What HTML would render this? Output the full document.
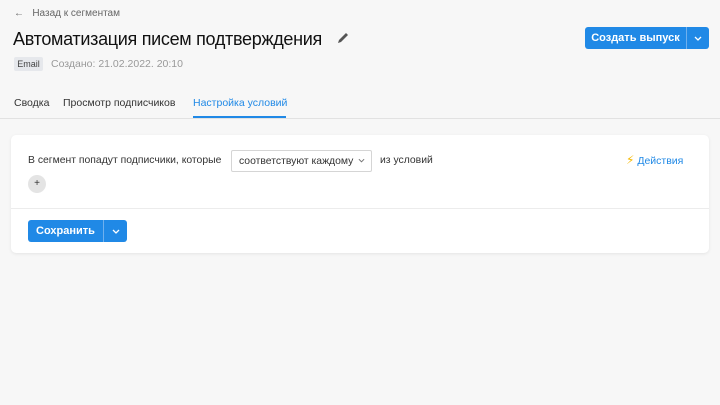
<!DOCTYPE html>
<html><head><meta charset="utf-8"><style>
*{box-sizing:border-box;margin:0;padding:0}
body{width:720px;height:405px;background:#f7f7f7;font-family:"Liberation Sans","DejaVu Sans",sans-serif;position:relative;overflow:hidden;color:#222}
.a{position:absolute;white-space:nowrap}
.btn{background:#2089e6;color:#fff;font-weight:bold;font-size:11px;border-radius:3px;display:flex;align-items:center}
</style></head><body>
<div class="a" style="left:14px;top:8px;font-size:10px;color:#666">&#8592;&nbsp;&nbsp; Назад к сегментам</div>
<div class="a" style="left:13px;top:29px;font-size:18px;color:#111;letter-spacing:-0.3px">Автоматизация писем подтверждения</div>
<svg class="a" style="left:336px;top:31px" width="14" height="14" viewBox="0 0 14 14"><path d="M2 12 L3 9 L10 2 L12 4 L5 11 Z" fill="#555"/></svg>
<div class="a" style="left:14px;top:57px;width:29px;height:14px;background:#e6e8ec;border-radius:2px;font-size:9px;color:#444;text-align:center;line-height:14px">Email</div>
<div class="a" style="left:51px;top:58px;font-size:10.5px;color:#999">Создано: 21.02.2022. 20:10</div>
<div class="a" style="left:14px;top:97px;font-size:10.5px;color:#333">Сводка</div>
<div class="a" style="left:63px;top:97px;font-size:10.5px;color:#333">Просмотр подписчиков</div>
<div class="a" style="left:193px;top:97px;font-size:10.5px;color:#2089e6">Настройка условий</div>
<div class="a" style="left:193px;top:116px;width:93px;height:2px;background:#2089e6"></div>
<div class="a" style="left:0;top:118px;width:720px;height:1px;background:#e2e2e2"></div>
<div class="a btn" style="left:585px;top:27px;width:124px;height:22px"><span style="width:101px;text-align:center">Создать выпуск</span><span style="width:1px;height:22px;background:#6fb0ee"></span><span style="flex:1;display:flex;justify-content:center"><svg width="8" height="5" viewBox="0 0 8 5"><path d="M1 1 L4 4 L7 1" stroke="#fff" stroke-width="1.3" fill="none"/></svg></span></div>
<div class="a" style="left:11px;top:135px;width:698px;height:118px;background:#fff;border-radius:5px;box-shadow:0 1px 3px rgba(0,0,0,0.08)"></div>
<div class="a" style="left:28px;top:155px;font-size:10.4px;color:#333">В сегмент попадут подписчики, которые</div>
<div class="a" style="left:231px;top:150px;width:141px;height:22px;border:1px solid #d5d5d5;border-radius:2px;font-size:10.4px;color:#333;padding:5px 0 0 7px">соответствуют каждому <svg width="7" height="5" viewBox="0 0 8 5" style="margin-left:2px;vertical-align:1px"><path d="M1 1 L4 4 L7 1" stroke="#777" stroke-width="1.2" fill="none"/></svg></div>
<div class="a" style="left:380px;top:155px;font-size:10.4px;color:#333">из условий</div>
<div class="a" style="left:626px;top:153px;font-size:10.5px;color:#2089e6"><span style="color:#f5b800;font-size:12px">&#9889;</span> Действия</div>
<div class="a" style="left:28px;top:175px;width:18px;height:18px;border-radius:50%;background:#e4e4e4;font-size:10px;text-align:center;line-height:18px;color:#333">+</div>
<div class="a" style="left:11px;top:208px;width:698px;height:1px;background:#ececec"></div>
<div class="a btn" style="left:28px;top:220px;width:99px;height:22px"><span style="width:75px;text-align:center">Сохранить</span><span style="width:1px;height:22px;background:#6fb0ee"></span><span style="flex:1;display:flex;justify-content:center"><svg width="8" height="5" viewBox="0 0 8 5"><path d="M1 1 L4 4 L7 1" stroke="#fff" stroke-width="1.3" fill="none"/></svg></span></div>
</body></html>
